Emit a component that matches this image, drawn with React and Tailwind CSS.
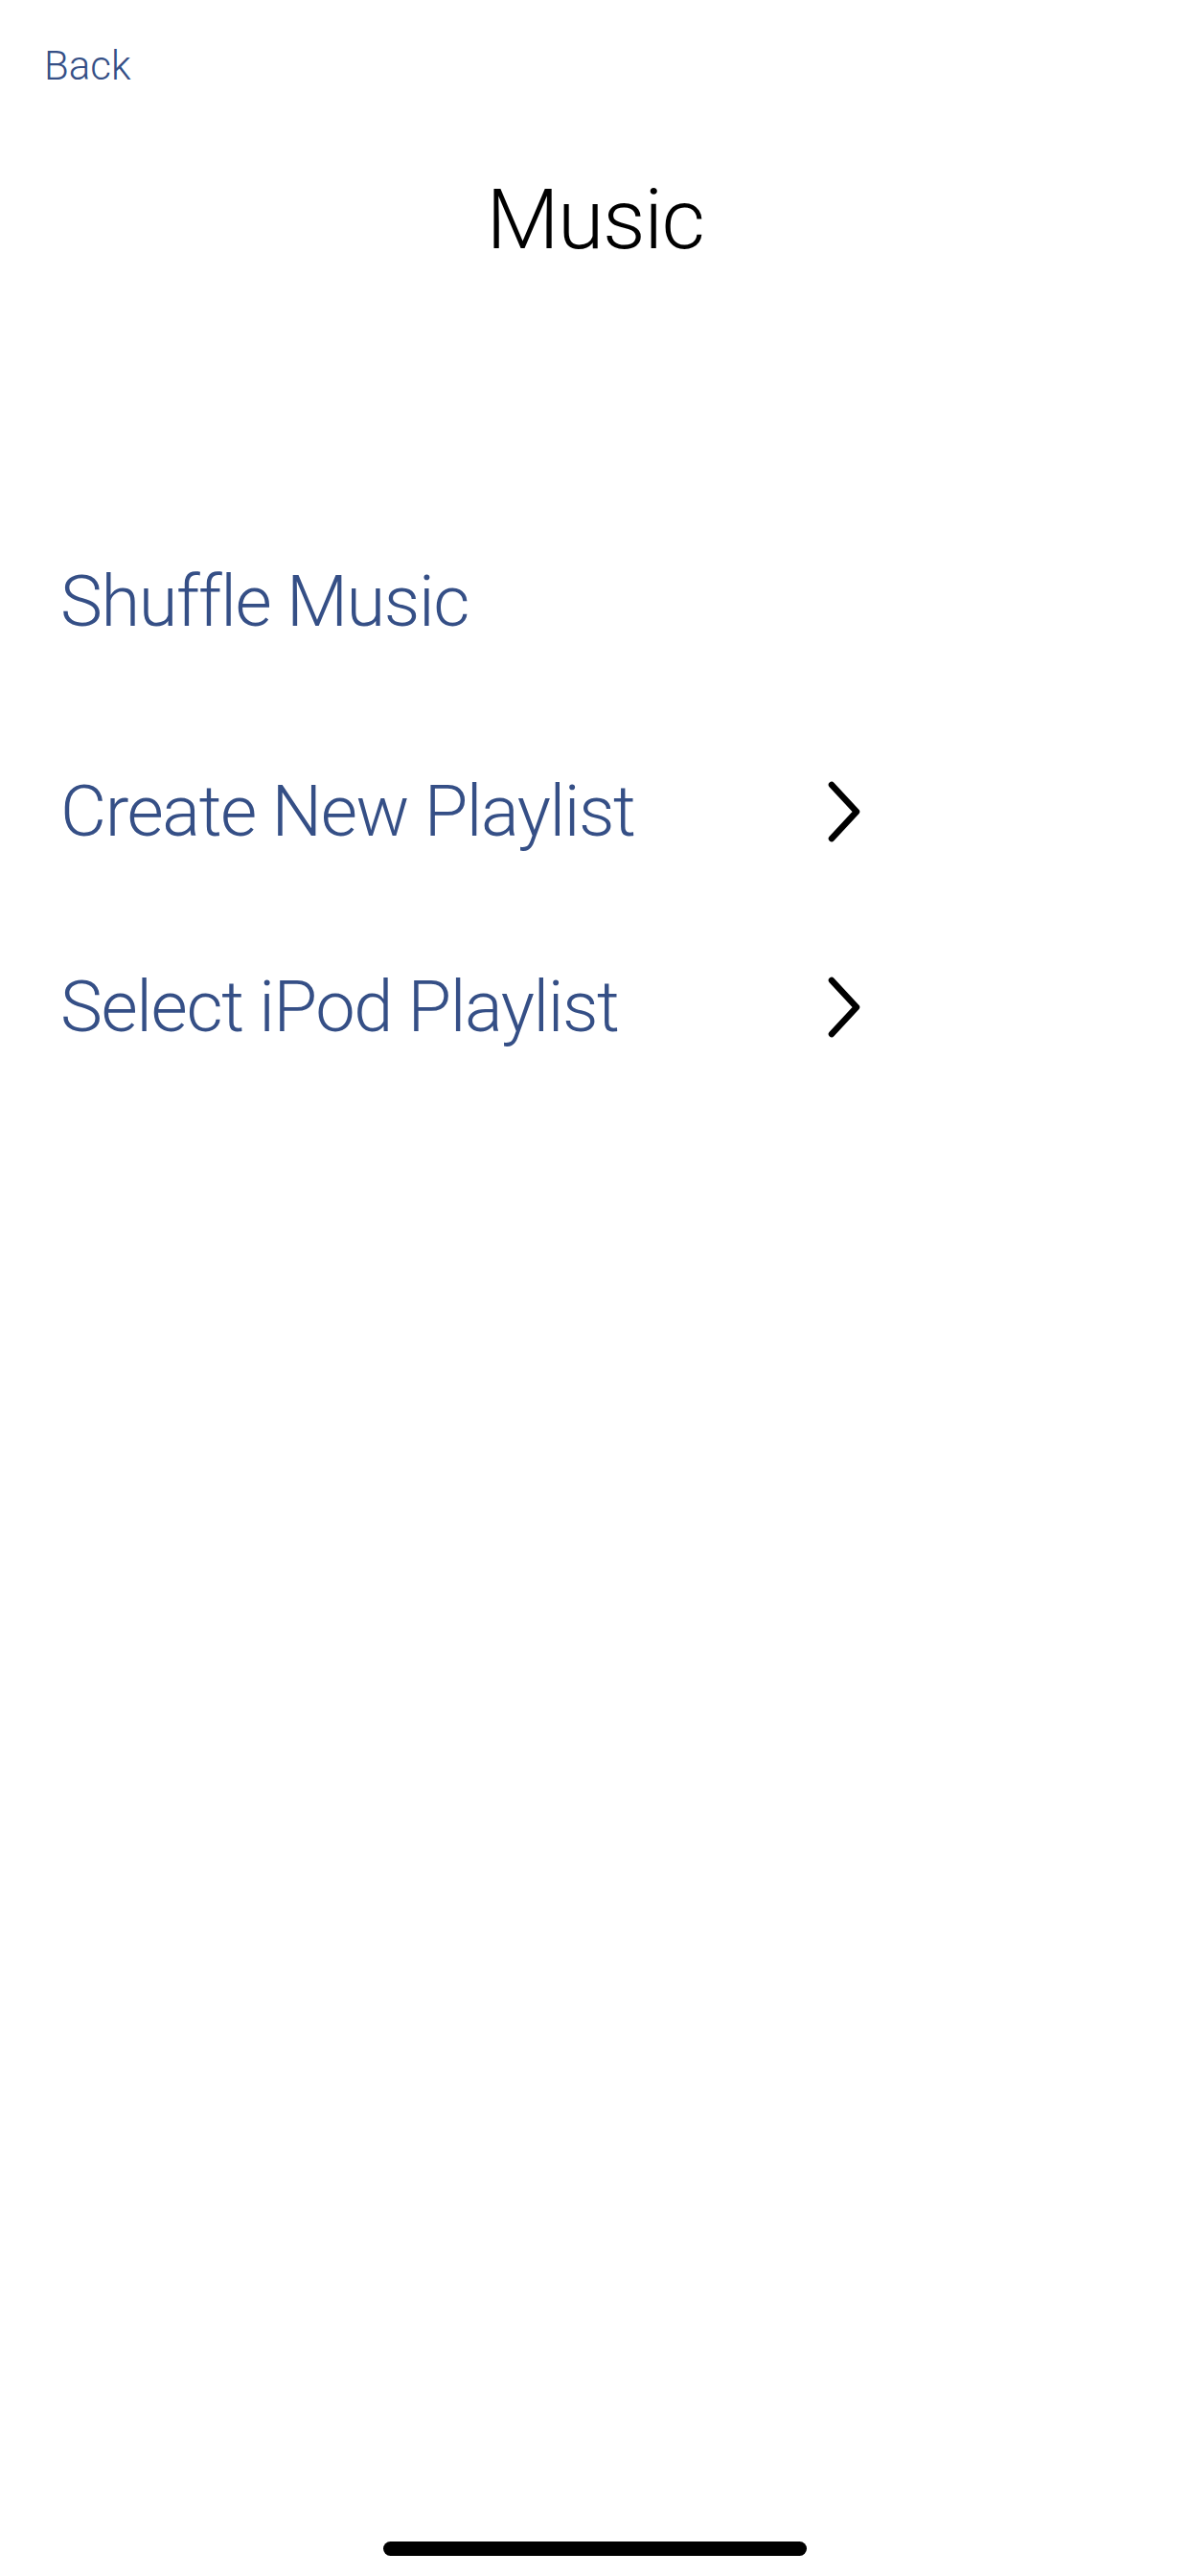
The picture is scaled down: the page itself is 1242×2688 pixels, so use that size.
import React from 'react';

const font = { fontFamily: 'Roboto, "Liberation Sans", sans-serif' };

function Chevron() {
  return (
    <svg width="40" height="66" viewBox="0 0 40 66" className="shrink-0">
      <path d="M5 5 L31 33 L5 61" fill="none" stroke="#000" strokeWidth="6.5" strokeLinecap="round" strokeLinejoin="round" />
    </svg>
  );
}

function Row({ label, arrow, className }) {
  return (
    <div className={`flex w-[840px] items-center justify-between ${className}`}>
      <span className="text-[74px] font-light leading-none tracking-[-1.4px] text-[#354f86]">{label}</span>
      {arrow && <Chevron />}
    </div>
  );
}

export default function App() {
  return (
    <div className="flex min-h-screen w-full flex-col bg-white" style={font}>
      {/* barra superior */}
      <div className="pl-[46px] pt-[48px]">
        <span className="text-[42px] font-light leading-none text-[#354f86]">Back</span>
      </div>
      <h1 className="mt-[95px] text-center text-[88px] font-light leading-none tracking-[-1.4px] text-black">Music</h1>

      {/* opciones */}
      <div className="mt-[318px] flex flex-col pl-[63px]">
        <Row label="Shuffle Music" />
        <Row label="Create New Playlist" arrow className="mt-[145px]" />
        <Row label="Select iPod Playlist" arrow className="mt-[130px]" />
      </div>

      <div className="mt-auto mb-[21px] flex justify-center">
        <div className="h-[15px] w-[442px] rounded-full bg-black" />
      </div>
    </div>
  );
}
